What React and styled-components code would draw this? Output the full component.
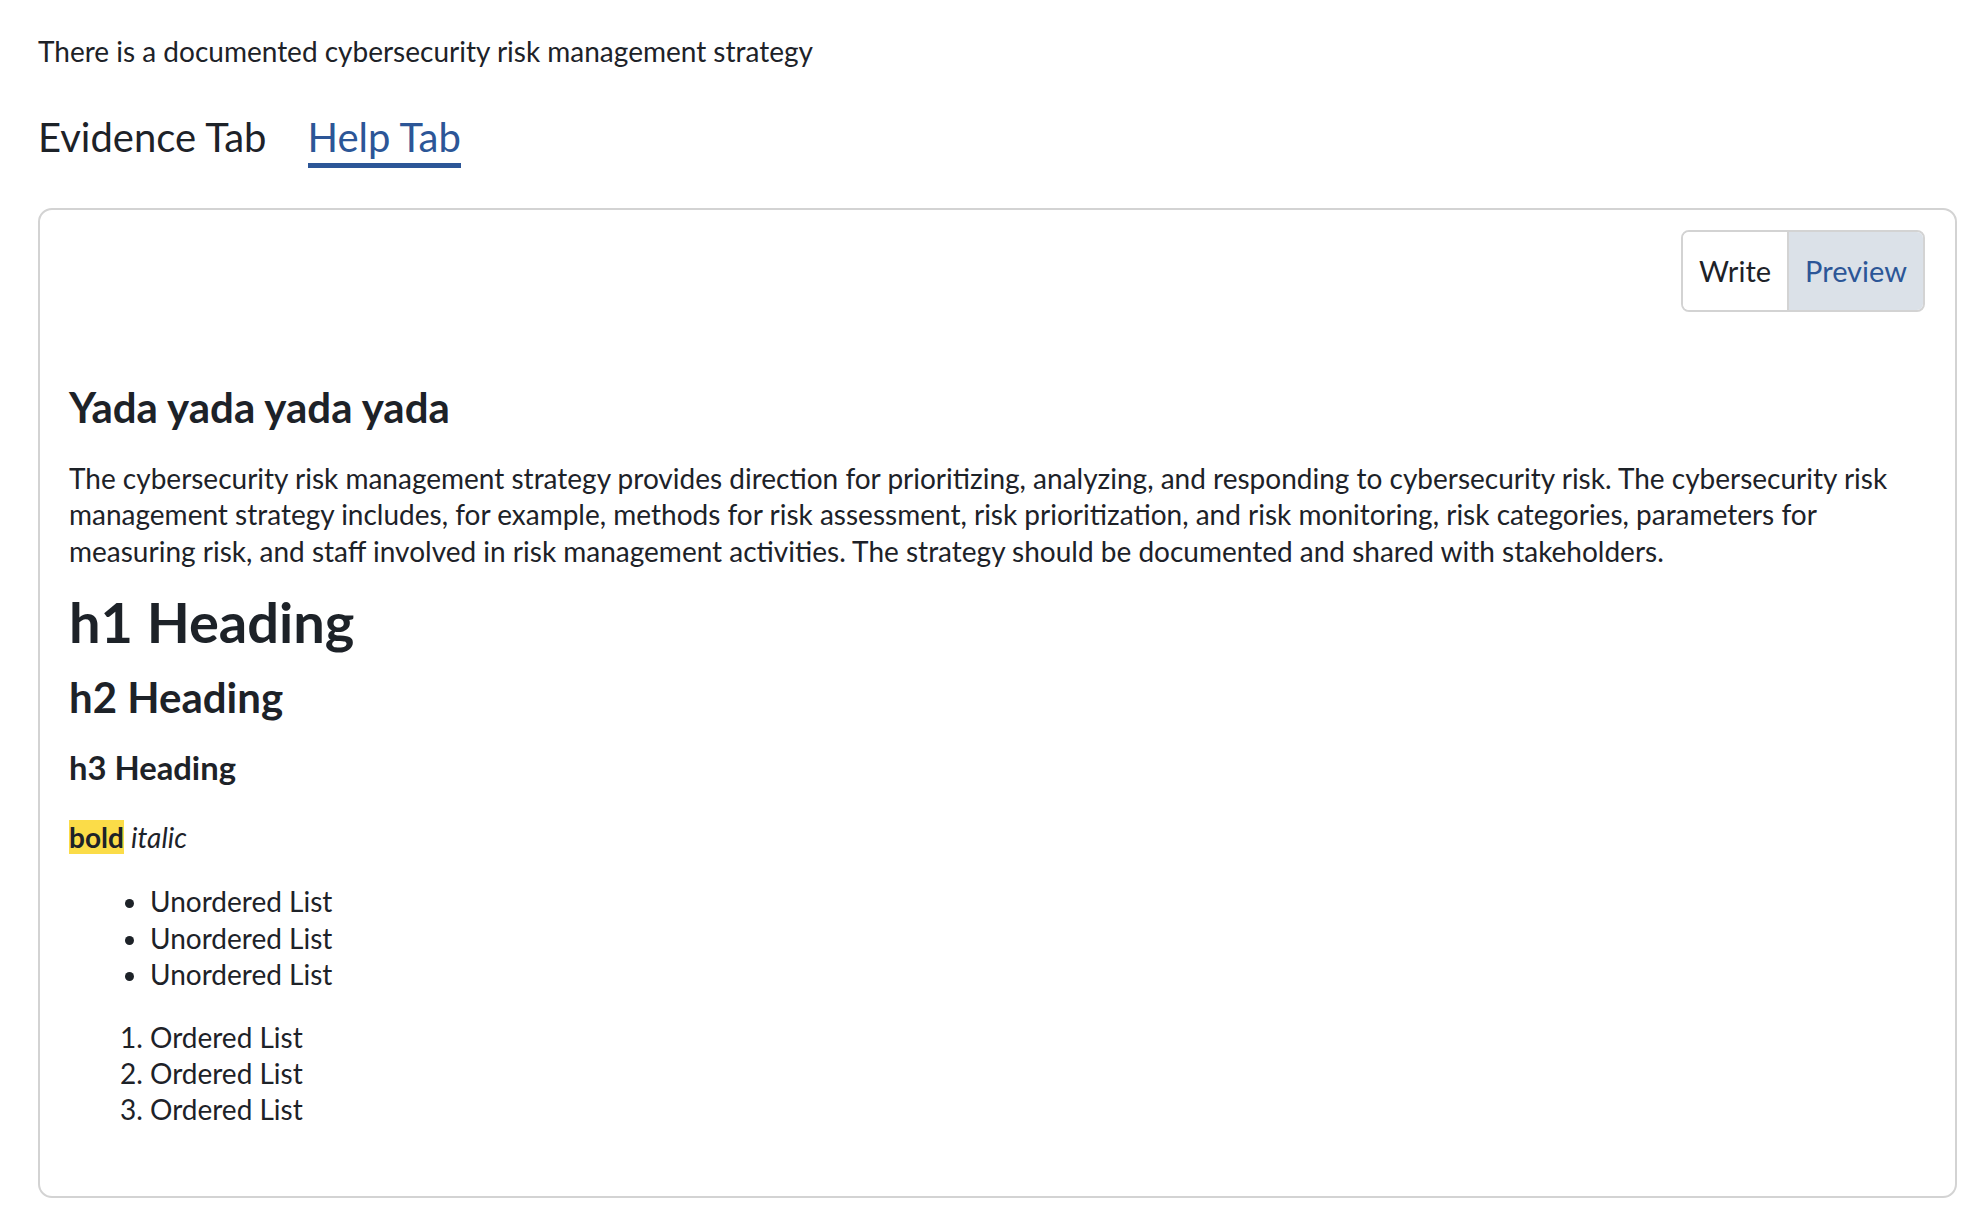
import React from "react";
import styled, { createGlobalStyle } from "styled-components";

const GlobalStyle = createGlobalStyle`
  html, body {
    margin: 0;
    padding: 0;
    background: #ffffff;
  }
  body {
    font-family: Lato, "Open Sans", "Liberation Sans", sans-serif;
    color: #1d2228;
  }
`;

const Page = styled.div`
  padding: 33px 11px 24px 38px;
  font-size: 28px;
  line-height: 36.4px;
`;

const Question = styled.div`
  font-size: 28px;
  line-height: 36.4px;
  color: #1d2228;
`;

const Tabs = styled.div`
  display: flex;
  gap: 41px;
  margin-top: 44px;
`;

const Tab = styled.button`
  font-family: inherit;
  font-size: 40px;
  line-height: 48px;
  background: none;
  border: none;
  padding: 0 0 2px;
  margin: 0;
  cursor: pointer;
  color: ${(p) => (p.$active ? "#2c5697" : "#1d2228")};
  border-bottom: 5px solid ${(p) => (p.$active ? "#2c5697" : "transparent")};
`;

const Panel = styled.section`
  margin-top: 40px;
  border: 2px solid #d3d3d3;
  border-radius: 14px;
  padding: 20px 30px 68px 29px;
  display: flex;
  flex-direction: column;
`;

const Toggle = styled.div`
  align-self: flex-end;
  display: flex;
  border: 2px solid #d3d3d3;
  border-radius: 8px;
  overflow: hidden;
`;

const ToggleButton = styled.button`
  font-family: inherit;
  font-size: 29px;
  line-height: 36px;
  border: none;
  margin: 0;
  padding: 21px 16px;
  cursor: pointer;
  background: ${(p) => (p.$active ? "#dbe1e8" : "#ffffff")};
  color: ${(p) => (p.$active ? "#2c5697" : "#1d2228")};
  & + & {
    border-left: 2px solid #d3d3d3;
  }
`;

const Preview = styled.div`
  margin-top: 70px;
  font-size: 28px;
  line-height: 36.4px;
`;

const H1 = styled.h1`
  font-size: 56px;
  line-height: 1.2;
  font-weight: 700;
  margin: ${(p) => p.$top || 0}px 0 0;
`;

const H2 = styled.h2`
  font-size: 42px;
  line-height: 1.2;
  font-weight: 700;
  margin: ${(p) => p.$top || 0}px 0 0;
`;

const H3 = styled.h3`
  font-size: 32.76px;
  line-height: 1.2;
  font-weight: 700;
  margin: ${(p) => p.$top || 0}px 0 0;
`;

const Text = styled.p`
  margin: ${(p) => p.$top || 0}px 0 0;
`;

const Mark = styled.strong`
  background: #fbdc48;
  font-weight: 700;
`;

const Em = styled.em`
  font-style: italic;
`;

const BulletList = styled.ul`
  margin: ${(p) => p.$top || 0}px 0 0;
  padding-left: 81px;
`;

const NumberList = styled.ol`
  margin: ${(p) => p.$top || 0}px 0 0;
  padding-left: 81px;
`;

export default function App() {
  return (
    <>
      <GlobalStyle />
      <Page>
        <Question>There is a documented cybersecurity risk management strategy</Question>
        <Tabs>
          <Tab>Evidence Tab</Tab>
          <Tab $active>Help Tab</Tab>
        </Tabs>
        <Panel>
          <Toggle>
            <ToggleButton>Write</ToggleButton>
            <ToggleButton $active>Preview</ToggleButton>
          </Toggle>
          <Preview>
            <H2>Yada yada yada yada</H2>
            <Text $top={27}>
              The cybersecurity risk management strategy provides direction for prioritizing, analyzing, and responding to
              cybersecurity risk. The cybersecurity risk management strategy includes, for example, methods for risk
              assessment, risk prioritization, and risk monitoring, risk categories, parameters for measuring risk, and staff
              involved in risk management activities. The strategy should be documented and shared with stakeholders.
            </Text>
            <H1 $top={18.5}>h1 Heading</H1>
            <H2 $top={17.5}>h2 Heading</H2>
            <H3 $top={25}>h3 Heading</H3>
            <Text $top={32}>
              <Mark>bold</Mark> <Em>italic</Em>
            </Text>
            <BulletList $top={28}>
              <li>Unordered List</li>
              <li>Unordered List</li>
              <li>Unordered List</li>
            </BulletList>
            <NumberList $top={26}>
              <li>Ordered List</li>
              <li>Ordered List</li>
              <li>Ordered List</li>
            </NumberList>
          </Preview>
        </Panel>
      </Page>
    </>
  );
}
